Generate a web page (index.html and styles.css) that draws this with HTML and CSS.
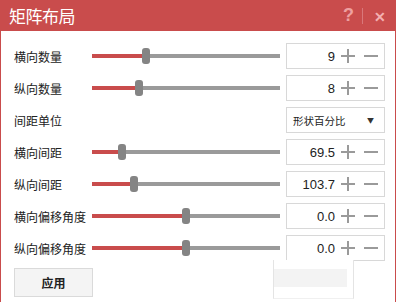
FILE: index.html
```html
<!DOCTYPE html>
<html lang="zh-CN">
  <head>
    <meta charset="UTF-8" />
    <title>矩阵布局</title>
    <link rel="stylesheet" href="styles.css">
  </head>
  <body>
    <div class="window">
      <div class="titlebar">
        <span class="title">矩阵布局</span>
        <span class="help">?</span>
        <span class="sep"></span>
        <span class="close">&#x2715;</span>
      </div>
      <div class="content">
        <div class="row">
          <span class="label">横向数量</span>
          <div class="slider"><div class="fill" style="width: 50px"></div><div class="thumb"></div><div class="rest"></div></div>
          <div class="box"><span class="val">9</span><span class="plus"></span><span class="minus"></span></div>
        </div>
        <div class="row">
          <span class="label">纵向数量</span>
          <div class="slider"><div class="fill" style="width: 43px"></div><div class="thumb"></div><div class="rest"></div></div>
          <div class="box"><span class="val">8</span><span class="plus"></span><span class="minus"></span></div>
        </div>
        <div class="row">
          <span class="label">间距单位</span>
          <div></div>
          <div class="box select"><span class="opt">形状百分比</span><span class="arrow">&#9660;</span></div>
        </div>
        <div class="row">
          <span class="label">横向间距</span>
          <div class="slider"><div class="fill" style="width: 26px"></div><div class="thumb"></div><div class="rest"></div></div>
          <div class="box"><span class="val">69.5</span><span class="plus"></span><span class="minus"></span></div>
        </div>
        <div class="row">
          <span class="label">纵向间距</span>
          <div class="slider"><div class="fill" style="width: 38px"></div><div class="thumb"></div><div class="rest"></div></div>
          <div class="box"><span class="val">103.7</span><span class="plus"></span><span class="minus"></span></div>
        </div>
        <div class="row">
          <span class="label">横向偏移角度</span>
          <div class="slider"><div class="fill" style="width: 90px"></div><div class="thumb"></div><div class="rest"></div></div>
          <div class="box"><span class="val">0.0</span><span class="plus"></span><span class="minus"></span></div>
        </div>
        <div class="row">
          <span class="label">纵向偏移角度</span>
          <div class="slider"><div class="fill" style="width: 90px"></div><div class="thumb"></div><div class="rest"></div></div>
          <div class="box"><span class="val">0.0</span><span class="plus"></span><span class="minus"></span></div>
        </div>
        <div class="actions">
          <button class="apply">应用</button>
        </div>
        <div class="ghost"><div class="ghost-bar"></div></div>
      </div>
    </div>
  </body>
</html>
```
FILE: styles.css
```css
body {
  margin: 0;
  background: #fff;
  font-family: "Noto Sans CJK SC", "Liberation Sans", sans-serif;
  color: #222;
}

.window {
  width: 394px;
  height: 302px;
  border-left: 1px solid #c94c4c;
  border-right: 1px solid #c94c4c;
  overflow: hidden;
}

.titlebar {
  height: 31px;
  margin: 0 -1px;
  background: #c94c4c;
  display: flex;
  align-items: center;
  padding: 0 10px 0 9px;
}

.title {
  color: #fff;
  font-size: 17px;
  flex: 1;
  letter-spacing: -0.5px;
}

.help {
  color: #eea0a0;
  font-family: "Liberation Sans", sans-serif;
  font-weight: bold;
  font-size: 18px;
}

.sep {
  width: 1px;
  height: 16px;
  background: #d9777a;
  margin: 0 11px 0 8px;
}

.close {
  color: #f4b0b0;
  font-size: 14px;
  font-weight: bold;
}

.content {
  position: relative;
  padding: 9px 0 0 13px;
}

.row {
  display: grid;
  grid-template-columns: 72px 188px 99px;
  column-gap: 6px;
  height: 32px;
  align-items: center;
}

.label {
  font-size: 12px;
  white-space: nowrap;
}

.slider {
  display: flex;
  align-items: center;
  height: 16px;
}

.fill {
  height: 4px;
  background: #c94c4c;
}

.thumb {
  flex: none;
  width: 8px;
  height: 16px;
  border-radius: 3px;
  background: #848484;
}

.rest {
  flex: 1;
  height: 4px;
  background: #9a9a9a;
}

.box {
  height: 24px;
  border: 1px solid #d8d8d8;
  display: flex;
  align-items: center;
  justify-content: flex-end;
  padding-right: 6px;
}

.val {
  font-family: "Liberation Sans", sans-serif;
  font-size: 13px;
}

.plus,
.minus {
  position: relative;
  width: 14px;
  height: 14px;
  margin-left: 9px;
}

.plus {
  margin-left: 6px;
}

.plus::before,
.minus::before {
  content: "";
  position: absolute;
  left: 0;
  right: 0;
  top: 6px;
  height: 2px;
  background: #9a9a9a;
}

.plus::after {
  content: "";
  position: absolute;
  top: 0;
  bottom: 0;
  left: 6px;
  width: 2px;
  background: #9a9a9a;
}

.select {
  justify-content: space-between;
  padding: 0 10px 0 6px;
}

.opt {
  font-size: 10.5px;
}

.arrow {
  font-size: 7px;
  color: #333;
}

.actions {
  padding-top: 4px;
}

.apply {
  width: 79px;
  height: 29px;
  background: #f4f4f4;
  border: 1px solid #dadada;
  font-family: "Noto Sans CJK SC", sans-serif;
  font-weight: bold;
  font-size: 12px;
  color: #222;
}

.ghost {
  position: absolute;
  left: 272px;
  top: 229px;
  width: 79px;
  height: 38px;
  background: #fff;
  border-left: 1px solid #e4e4e4;
  border-right: 1px solid #e4e4e4;
  border-bottom: 1px solid #f0f0f0;
}

.ghost-bar {
  margin-top: 9px;
  width: 73px;
  height: 18px;
  background: #f3f3f3;
}
```
